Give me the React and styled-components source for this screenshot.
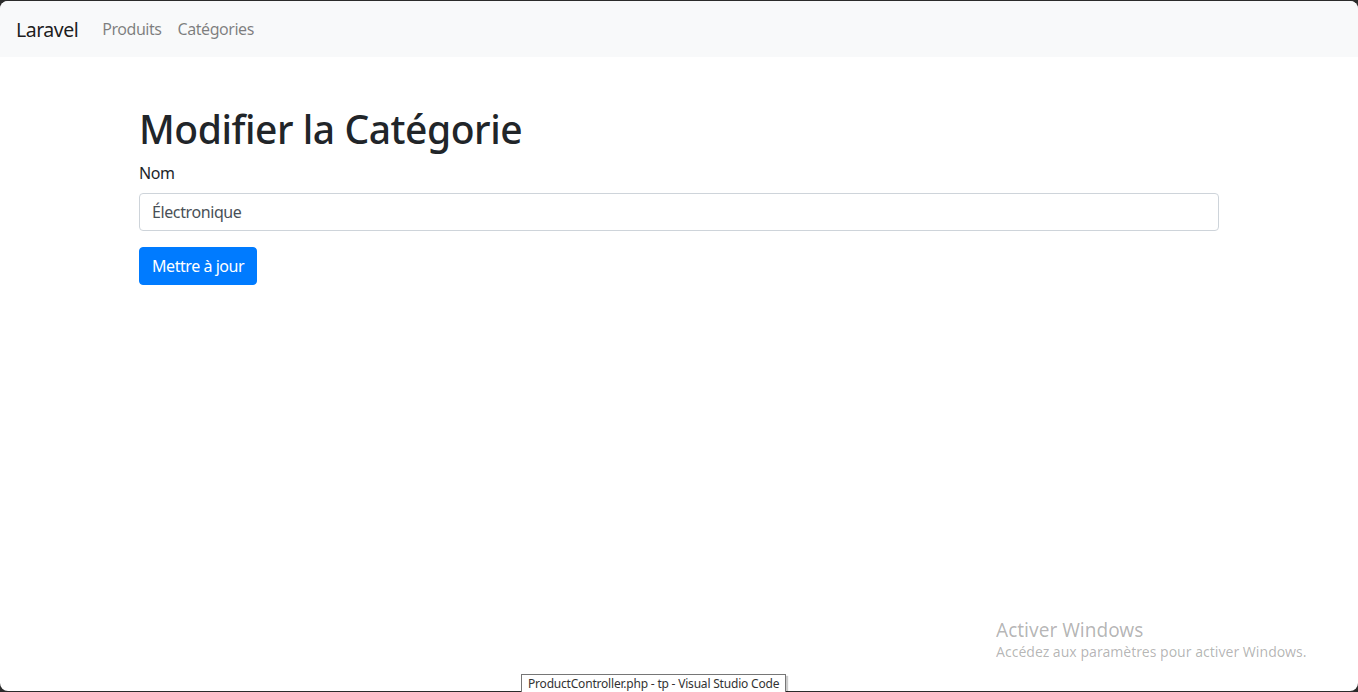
import styled, { createGlobalStyle } from "styled-components";

const GlobalStyle = createGlobalStyle`
  html, body {
    margin: 0;
    padding: 0;
    background: #2b2b2b;
  }
  * {
    box-sizing: border-box;
  }
`;

const Window = styled.div`
  width: 1358px;
  height: 690px;
  margin-top: 1px;
  background: #fff;
  border-radius: 8px;
  overflow: hidden;
  position: relative;
  font-family: "Noto Sans", "Open Sans", sans-serif;
  color: #212529;
`;

const Navbar = styled.nav`
  height: 56px;
  background: #f8f9fa;
  display: flex;
  align-items: center;
  padding: 0 16px;
`;

const Brand = styled.a`
  font-size: 19.5px;
  letter-spacing: -0.5px;
  color: rgba(0, 0, 0, 0.9);
  margin-right: 16px;
  text-decoration: none;
`;

const NavLink = styled.a`
  font-size: 16px;
  letter-spacing: -0.45px;
  color: rgba(0, 0, 0, 0.5);
  padding: 8px;
  text-decoration: none;
`;

const Container = styled.div`
  width: 1080px;
  margin: 48px 0 0 139px;
`;

const Title = styled.h1`
  font-size: 39px;
  letter-spacing: -0.45px;
  font-weight: 500;
  line-height: 48px;
  margin: 0 0 8px;
`;

const FormGroup = styled.div`
  margin-bottom: 16px;
  display: flex;
  flex-direction: column;
`;

const Label = styled.label`
  font-size: 16px;
  letter-spacing: -0.4px;
  line-height: 24px;
  margin-bottom: 8px;
`;

const Input = styled.input`
  height: 38px;
  padding: 6px 12px;
  font-size: 16px;
  letter-spacing: -0.4px;
  font-family: inherit;
  color: #495057;
  border: 1px solid #ced4da;
  border-radius: 4px;
  outline: none;
`;

const Button = styled.button`
  height: 38px;
  padding: 6px 12px;
  font-size: 16px;
  letter-spacing: -0.45px;
  font-family: inherit;
  color: #fff;
  background: #007bff;
  border: 1px solid #007bff;
  border-radius: 4px;
`;

const Watermark = styled.div`
  position: absolute;
  left: 996px;
  top: 617px;
  color: rgba(0, 0, 0, 0.3);
`;

const WatermarkTitle = styled.div`
  font-size: 19px;
  line-height: 24px;
`;

const WatermarkText = styled.div`
  font-size: 14px;
  line-height: 20px;
`;

const Tooltip = styled.div`
  position: absolute;
  left: 521px;
  top: 674px;
  height: 19px;
  padding: 0 6px;
  background: #fff;
  border: 1px solid #767676;
  font-size: 12px;
  letter-spacing: -0.2px;
  line-height: 17px;
  color: #333;
  box-shadow: 2px 2px 1px rgba(0, 0, 0, 0.2);
  font-family: "Noto Sans", sans-serif;
`;

const App = () => {
  return (
    <>
      <GlobalStyle />
      <Window>
        <Navbar>
          <Brand href="#">Laravel</Brand>
          <NavLink href="#">Produits</NavLink>
          <NavLink href="#">Catégories</NavLink>
        </Navbar>

        <Container>
          <Title>Modifier la Catégorie</Title>
          <FormGroup>
            <Label>Nom</Label>
            <Input defaultValue="Électronique" />
          </FormGroup>
          <Button>Mettre à jour</Button>
        </Container>

        <Watermark>
          <WatermarkTitle>Activer Windows</WatermarkTitle>
          <WatermarkText>Accédez aux paramètres pour activer Windows.</WatermarkText>
        </Watermark>
      </Window>
      <Tooltip>ProductController.php - tp - Visual Studio Code</Tooltip>
    </>
  );
};

export default App;
